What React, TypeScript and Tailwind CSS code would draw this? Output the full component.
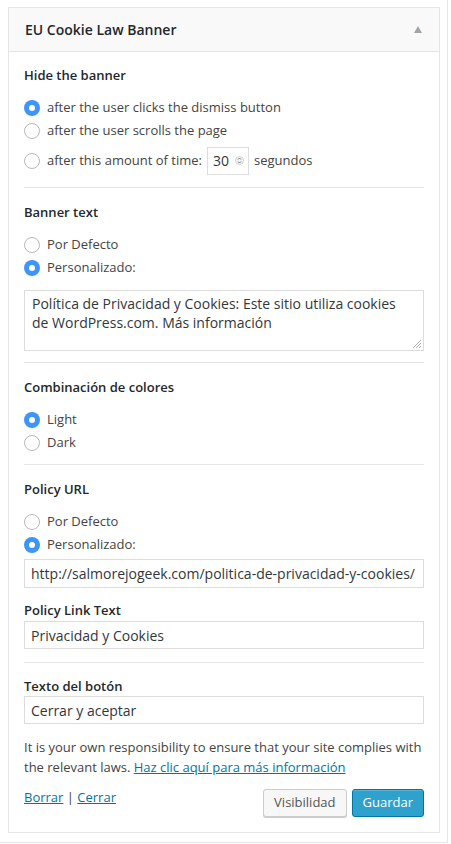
import React from "react";

function Radio({ checked }: { checked?: boolean }) {
  return checked ? (
    <span className="flex h-[16px] w-[16px] shrink-0 items-center justify-center rounded-full bg-[#3d95f6]">
      <span className="h-[6px] w-[6px] rounded-full bg-white" />
    </span>
  ) : (
    <span className="h-[16px] w-[16px] shrink-0 rounded-full border border-[#b9b9b9] bg-white" />
  );
}

function RadioRow({ checked, children, className = "" }: { checked?: boolean; children: React.ReactNode; className?: string }) {
  return (
    <div className={"flex h-[23px] items-center gap-[7px] " + className}>
      <Radio checked={checked} />
      <span className="text-[13px] text-[#444]">{children}</span>
    </div>
  );
}

function Heading({ children, className = "" }: { children: React.ReactNode; className?: string }) {
  return <div className={"text-[13px] font-semibold leading-[20px] text-[#23282d] " + className}>{children}</div>;
}

function Divider({ className = "" }: { className?: string }) {
  return <div className={"h-px bg-[#e5e5e5] " + className} />;
}

function TextInput({ value, className = "" }: { value: string; className?: string }) {
  return (
    <div className={"flex items-center border border-[#dddddd] bg-white px-[6px] text-[14px] text-[#32373c] " + className}>
      {value}
    </div>
  );
}

export default function App() {
  return (
    <div
      className="min-h-[844px] bg-white"
      style={{ fontFamily: '"Open Sans", "Noto Sans", sans-serif' }}
    >
      <div className="h-[843px] w-[448px] border-r border-b border-[#e5e5e5] pl-[8px] pt-[7px]">
        <div className="w-[432px] border border-[#e5e5e5] bg-white">
          <div className="flex h-[44px] items-center justify-between border-b border-[#e5e5e5] bg-[#f9f9f9] pl-[16px] pr-[17px]">
            <span className="text-[14px] font-semibold text-[#23282d]">EU Cookie Law Banner</span>
            <svg width="8" height="7" viewBox="0 0 8 7">
              <path d="M4 0 L8 7 L0 7 Z" fill="#a0a5aa" />
            </svg>
          </div>
          <div className="px-[15px] pb-[15px]">
            <Heading className="mt-[13px]">Hide the banner</Heading>
            <RadioRow checked className="mt-[11px]">after the user clicks the dismiss button</RadioRow>
            <RadioRow>after the user scrolls the page</RadioRow>
            <div className="mt-[4px] flex h-[29px] items-center gap-[7px]">
              <Radio />
              <span className="text-[13px] text-[#444]">after this amount of time:</span>
              <div className="ml-[-2px] flex h-[28px] w-[42px] items-center justify-between border border-[#dddddd] pl-[5px] pr-[4px]">
                <span className="text-[14px] text-[#32373c]">30</span>
                <svg width="9" height="11" viewBox="0 0 9 11">
                  <circle cx="4.5" cy="5.5" r="4" fill="#f4f4f4" stroke="#c8c8c8" strokeWidth="0.8" />
                  <path d="M3 4.5 L4.5 3 L6 4.5" fill="none" stroke="#666" strokeWidth="0.9" />
                  <path d="M3 6.5 L4.5 8 L6 6.5" fill="none" stroke="#666" strokeWidth="0.9" />
                </svg>
              </div>
              <span className="ml-[-2px] text-[13px] text-[#444]">segundos</span>
            </div>
            <Divider className="mt-[12px]" />

            <Heading className="mt-[14px]">Banner text</Heading>
            <RadioRow className="mt-[11px]">Por Defecto</RadioRow>
            <RadioRow checked>Personalizado:</RadioRow>
            <div className="relative mt-[11px] h-[61px] border border-[#dddddd] pl-[7px] pr-[24px] pt-[3px] text-[14px] leading-[19px] text-[#32373c]">
              Política de Privacidad y Cookies: Este sitio utiliza cookies de WordPress.com. Más información
              <svg className="absolute bottom-[1px] right-[1px]" width="11" height="11" viewBox="0 0 11 11">
                <path d="M10 2 L2 10 M10 5 L5 10 M10 8 L8 10" stroke="#999" strokeWidth="0.8" />
              </svg>
            </div>
            <Divider className="mt-[11px]" />

            <Heading className="mt-[14px]">Combinación de colores</Heading>
            <RadioRow checked className="mt-[11px]">Light</RadioRow>
            <RadioRow>Dark</RadioRow>
            <Divider className="mt-[10px]" />

            <Heading className="mt-[14px]">Policy URL</Heading>
            <RadioRow className="mt-[11px]">Por Defecto</RadioRow>
            <RadioRow checked>Personalizado:</RadioRow>
            <TextInput className="mt-[3px] h-[29px]" value="http://salmorejogeek.com/politica-de-privacidad-y-cookies/" />

            <Heading className="mt-[12px]">Policy Link Text</Heading>
            <TextInput className="mt-[1px] h-[28px]" value="Privacidad y Cookies" />
            <Divider className="mt-[13px]" />

            <Heading className="mt-[13px]">Texto del botón</Heading>
            <TextInput className="h-[28px]" value="Cerrar y aceptar" />

            <p className="mt-[14px] text-[13px] leading-[19.5px] text-[#444]">
              It is your own responsibility to ensure that your site complies with the relevant laws.{" "}
              <a className="text-[#0074a2] underline">Haz clic aquí para más información</a>
            </p>

            <div className="mt-[12px] flex items-start justify-between">
              <div className="mt-[-1px] text-[13px] text-[#444]">
                <a className="text-[#0074a2] underline">Borrar</a> | <a className="text-[#0074a2] underline">Cerrar</a>
              </div>
              <div className="flex gap-[5px]">
                <button className="h-[28px] rounded-[3px] border border-[#cccccc] bg-[#f7f7f7] px-[10px] text-[13px] text-[#555] shadow-[0_1px_0_#cccccc]">
                  Visibilidad
                </button>
                <button className="h-[28px] rounded-[3px] border border-[#0074a2] bg-[#2ea2cc] px-[10px] text-[13px] text-white shadow-[inset_0_1px_0_rgba(120,200,230,0.5)]">
                  Guardar
                </button>
              </div>
            </div>
          </div>
        </div>
      </div>
    </div>
  );
}
